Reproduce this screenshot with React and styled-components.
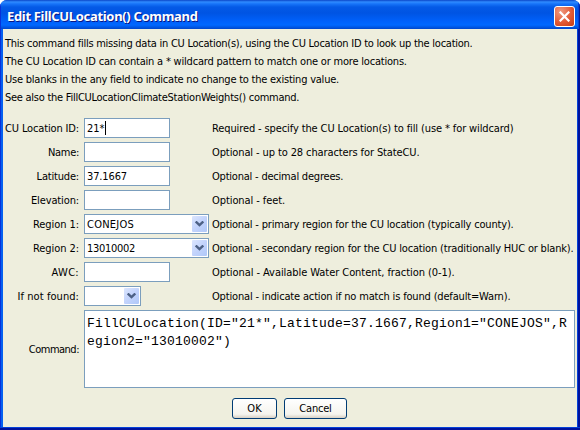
import React from 'react';
import styled, { createGlobalStyle } from 'styled-components';

const GlobalStyle = createGlobalStyle`
  * { box-sizing: border-box; }
  body { margin: 0; background: #fff; }
`;

const Window = styled.main`
  width: 580px;
  height: 430px;
  overflow: hidden;
  display: flex;
  flex-direction: column;
  border-radius: 7px 7px 0 0;
  background: #0055ea;
  color: #000;
  font: 11px "DejaVu Sans Condensed", "DejaVu Sans", sans-serif;
`;

const TitleBar = styled.header`
  flex: 0 0 29px;
  display: flex;
  align-items: center;
  justify-content: space-between;
  padding: 3px 5px 0 7px;
  background: linear-gradient(
    #0b46c8 0, #2f8bff 2px, #1673f8 4px, #045ae6 7px, #0054e3 13px,
    #0060fa 21px, #0068ff 25px, #0058e6 27px, #0046cb 29px
  );
  box-shadow: inset 1px 0 #0831d9, inset -1px 0 #001ea0, inset -2px 0 #0441d8;
`;

const Title = styled.h1`
  margin: 0;
  color: #fff;
  font: bold 13px/20px "Noto Sans", sans-serif;
  letter-spacing: -0.32px;
  text-shadow: 1px 1px 0 #0a1883;
  white-space: nowrap;
`;

const CloseButton = styled.button`
  width: 21px;
  height: 21px;
  margin-top: 1px;
  padding: 0;
  display: grid;
  place-items: center;
  border: 1px solid #fff;
  border-radius: 3px;
  background: radial-gradient(circle at 30% 25%, #f09a80, #e25a36 55%, #c73c12);
`;

const Frame = styled.div`
  flex: 1;
  display: flex;
  padding: 0 3px 3px;
  background: #eeeedd;
  box-shadow:
    inset 0 -2px #00129c,
    inset 0 -3px #0441d8,
    inset -2px 0 #00129c,
    inset -3px 0 #0441d8,
    inset 1px 0 #0831d9,
    inset 3px 0 #0560f0;
`;

const Content = styled.div`
  flex: 1;
  min-width: 0;
  display: flex;
  flex-direction: column;
  padding: 6px 2px 0 2px;
`;

const Text = styled.span`
  letter-spacing: ${(p) => p.$track || 0}px;
  white-space: nowrap;
`;

const Intro = styled.section`
  display: flex;
  flex-direction: column;
  line-height: 18px;
  margin-bottom: 11px;
`;

const Form = styled.form`
  display: flex;
  flex-direction: column;
`;

const Row = styled.div`
  display: grid;
  grid-template-columns: 74px 124px 1fr;
  column-gap: 5px;
  align-items: center;
  height: 20px;
  margin-bottom: 4px;
`;

const Label = styled(Text)`
  justify-self: end;
`;

const Hint = styled(Text)`
  margin-left: -1px;
`;

const Field = styled.div`
  width: ${(p) => p.$width}px;
  height: 20px;
  display: flex;
  align-items: center;
  padding: 0 1px 0 2px;
  border: 1px solid #7b9ebd;
  background: #fff;
`;

const Caret = styled.span`
  width: 1px;
  height: 14px;
  background: #000;
`;

const DropButton = styled.span`
  width: 15px;
  height: 16px;
  margin-left: auto;
  display: grid;
  place-items: center;
  border-radius: 1px;
  background: linear-gradient(135deg, #dce6fe, #c2d3fc 50%, #b0c8f8);
`;

const CommandRow = styled.div`
  display: grid;
  grid-template-columns: 74px 491px;
  column-gap: 5px;
  align-items: center;
`;

const CommandBox = styled.pre`
  height: 78px;
  margin: 0;
  padding: 4px 2px 3px;
  border: 1px solid #7b9ebd;
  background: #fff;
  font: 13px/18px "Liberation Mono", monospace;
  letter-spacing: 0.2px;
`;

const Actions = styled.footer`
  display: flex;
  justify-content: center;
  gap: 7px;
  margin: 10px 0 0 -1px;
`;

const Button = styled.button`
  width: ${(p) => p.$width}px;
  height: 21px;
  padding: 0 0 1px;
  border: 1px solid #003c74;
  border-radius: 3px;
  background: linear-gradient(#fff, #f5f4ee 80%, #d8d0c4);
  color: #000;
  font: inherit;
`;

const introLines = [
  ['This command fills missing data in CU Location(s), using the CU Location ID to look up the location.', -0.25],
  ['The CU Location ID can contain a * wildcard pattern to match one or more locations.', -0.2],
  ['Use blanks in the any field to indicate no change to the existing value.', -0.22],
  ['See also the FillCULocationClimateStationWeights() command.', -0.26],
];

const rows = [
  { label: ['CU Location ID:', -0.147], value: ['21*', 0], caret: true, width: 86, hint: ['Required - specify the CU Location(s) to fill (use * for wildcard)', -0.115] },
  { label: ['Name:', -0.3], width: 86, hint: ['Optional - up to 28 characters for StateCU.', -0.107] },
  { label: ['Latitude:', -0.18], value: ['37.1667', -0.13], width: 86, hint: ['Optional - decimal degrees.', -0.21] },
  { label: ['Elevation:', -0.13], width: 86, hint: ['Optional - feet.', -0.08] },
  { label: ['Region 1:', -0.07], value: ['CONEJOS', 0.24], select: true, width: 125, hint: ['Optional - primary region for the CU location (typically county).', -0.18] },
  { label: ['Region 2:', -0.07], value: ['13010002', -0.3], select: true, width: 125, hint: ['Optional - secondary region for the CU location (traditionally HUC or blank).', -0.174] },
  { label: ['AWC:', 0.3], width: 86, hint: ['Optional - Available Water Content, fraction (0-1).', -0.06] },
  { label: ['If not found:', 0.07], select: true, width: 57, hint: ['Optional - indicate action if no match is found (default=Warn).', -0.17] },
];

function CloseIcon() {
  return (
    <svg width="11" height="11" viewBox="0 0 11 11" stroke="#fff" strokeWidth="2.2">
      <path d="M0.7 0.7 10.3 10.3M10.3 0.7 0.7 10.3" />
    </svg>
  );
}

function Chevron() {
  return (
    <svg width="9" height="6" viewBox="0 0 9 6" fill="none" stroke="#4d6185" strokeWidth="2.4">
      <path d="M0.7 0.5 4.5 4.2 8.3 0.5" />
    </svg>
  );
}

export default function App() {
  return (
    <>
      <GlobalStyle />
      <Window>
        <TitleBar>
          <Title>Edit FillCULocation() Command</Title>
          <CloseButton aria-label="Close"><CloseIcon /></CloseButton>
        </TitleBar>
        <Frame>
          <Content>
            <Intro>
              {introLines.map(([text, track]) => <Text key={text} $track={track}>{text}</Text>)}
            </Intro>
            <Form>
              {rows.map(({ label, value, caret, select, width, hint }) => (
                <Row key={label[0]}>
                  <Label $track={label[1]}>{label[0]}</Label>
                  <Field $width={width}>
                    {value && <Text $track={value[1]}>{value[0]}</Text>}
                    {caret && <Caret />}
                    {select && <DropButton><Chevron /></DropButton>}
                  </Field>
                  <Hint $track={hint[1]}>{hint[0]}</Hint>
                </Row>
              ))}
              <CommandRow>
                <Label $track={-0.5}>Command:</Label>
                <CommandBox>{'FillCULocation(ID="21*",Latitude=37.1667,Region1="CONEJOS",R\negion2="13010002")'}</CommandBox>
              </CommandRow>
            </Form>
            <Actions>
              <Button $width={45}><Text>OK</Text></Button>
              <Button $width={63}><Text $track={-0.2}>Cancel</Text></Button>
            </Actions>
          </Content>
        </Frame>
      </Window>
    </>
  );
}
